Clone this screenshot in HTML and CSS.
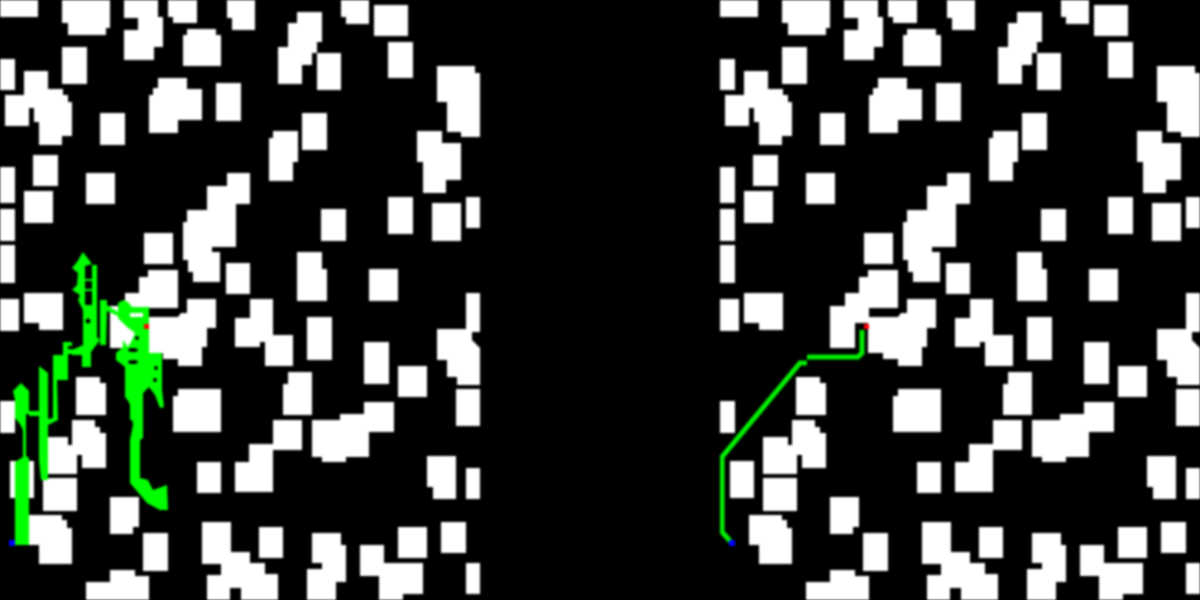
FILE: index.html
```html
<!DOCTYPE html>
<html lang="en">
<head>
<meta charset="utf-8">
<title>Path planning maps</title>
<link rel="stylesheet" href="styles.css">
</head>
<body>
<svg class="defs" width="0" height="0" aria-hidden="true">
  <defs>
    <g id="obstacles" class="obstacle">
      <rect x="0" y="0" width="38" height="17"/>
      <polygon points="62,0 110,0 110,28 106,28 106,35 68,35 68,23 62,23"/>
      <polygon points="124,0 158,0 158,17 163,17 163,47 154,47 154,60 124,60 124,30 138,30 138,18 124,18"/>
      <polygon points="168,0 197,0 197,23 173,23 173,17 168,17"/>
      <polygon points="183,35 187,35 187,29 216,29 216,35 221,35 221,66 183,66"/>
      <polygon points="227,0 255,0 255,30 232,30 232,18 227,18"/>
      <rect x="62" y="47" width="25" height="37"/>
      <rect x="0" y="59" width="15" height="31"/>
      <polygon points="24,71 48,71 48,89 63,89 63,95 68,95 68,102 72,102 72,136 62,136 62,145 39,145 39,122 34,122 34,108 29,108 29,126 5,126 5,95 24,95"/>
      <rect x="100" y="113" width="25" height="32"/>
      <polygon points="158,78 187,78 187,89 202,89 202,120 178,120 178,133 149,133 149,95 153,95 153,88 158,88"/>
      <rect x="216" y="83" width="25" height="38"/>
      <rect x="33" y="155" width="25" height="31"/>
      <rect x="0" y="167" width="15" height="36"/>
      <rect x="24" y="191" width="29" height="32"/>
      <rect x="86" y="173" width="29" height="31"/>
      <rect x="0" y="209" width="15" height="32"/>
      <rect x="0" y="245" width="15" height="38"/>
      <rect x="0" y="299" width="19" height="32"/>
      <polygon points="24,293 63,293 63,330 39,330 39,323 24,323"/>
      <rect x="144" y="233" width="29" height="31"/>
      <rect x="226" y="263" width="24" height="31"/>
      <polygon points="227,173 250,173 250,204 236,204 236,247 212,247 212,252 220,252 220,282 193,282 193,272 188,272 188,260 183,260 183,222 187,222 187,210 207,210 207,186 227,186"/>
      <polygon points="148,270 178,270 178,308 149,308 149,317 178,317 181,313 187,313 187,299 216,299 216,328 207,328 207,347 202,347 202,366 178,366 178,359 163,359 163,353 148,353 148,323 135,323 135,348 110,348 110,306 125,306 125,293 139,293 139,277 148,277"/>
      <polygon points="76,377 100,377 100,383 106,383 106,415 76,415"/>
      <rect x="0" y="401" width="15" height="32"/>
      <rect x="10" y="461" width="24" height="37"/>
      <rect x="43" y="478" width="34" height="33"/>
      <polygon points="43,437 68,437 68,445 72,445 72,420 95,420 95,427 100,427 100,433 106,433 106,468 82,468 82,455 77,455 77,474 43,474"/>
      <polygon points="29,515 62,515 62,520 67,520 67,528 72,528 72,564 39,564 39,545 29,545"/>
      <polygon points="110,497 139,497 139,527 133,527 133,534 110,534"/>
      <rect x="143" y="533" width="25" height="38"/>
      <polygon points="86,582 110,582 110,570 135,570 135,576 149,576 149,600 86,600"/>
      <polygon points="173,396 178,396 178,389 221,389 221,432 173,432"/>
      <rect x="197" y="462" width="24" height="31"/>
      <polygon points="235,462 249,462 249,444 273,444 273,492 235,492"/>
      <rect x="273" y="420" width="29" height="30"/>
      <polygon points="283,384 288,384 288,372 312,372 312,415 283,415"/>
      <polygon points="312,420 340,420 340,414 364,414 364,402 394,402 394,432 369,432 369,457 346,457 346,462 322,462 322,457 312,457"/>
      <polygon points="427,456 456,456 456,499 433,499 433,487 427,487"/>
      <rect x="466" y="468" width="14" height="31"/>
      <rect x="456" y="389" width="24" height="37"/>
      <rect x="259" y="527" width="24" height="31"/>
      <rect x="398" y="527" width="29" height="31"/>
      <rect x="441" y="522" width="25" height="31"/>
      <rect x="466" y="563" width="14" height="31"/>
      <path d="M202 522H231V552H250V563H265V574H278V600H241V588H230V600H207V575H221V564H202Z"/>
      <polygon points="312,533 341,533 341,545 346,545 346,582 336,582 336,600 307,600 307,569 322,569 322,563 312,563"/>
      <polygon points="360,545 384,545 384,563 423,563 423,594 403,594 403,600 379,600 379,576 360,576"/>
      <polygon points="297,12 322,12 322,42 317,42 317,53 312,53 312,65 302,65 302,84 278,84 278,47 288,47 288,23 297,23"/>
      <rect x="317" y="53" width="24" height="37"/>
      <polygon points="341,0 369,0 369,24 346,24 346,17 341,17"/>
      <rect x="374" y="5" width="34" height="31"/>
      <rect x="388" y="42" width="25" height="36"/>
      <polygon points="437,66 475,66 475,73 480,73 480,137 461,137 461,132 447,132 447,102 437,102"/>
      <rect x="302" y="113" width="25" height="37"/>
      <polygon points="269,138 273,138 273,131 298,131 298,162 293,162 293,181 269,181"/>
      <polygon points="417,131 442,131 442,143 461,143 461,180 446,180 446,193 423,193 423,162 417,162"/>
      <rect x="388" y="197" width="25" height="37"/>
      <rect x="466" y="197" width="14" height="31"/>
      <rect x="432" y="203" width="29" height="38"/>
      <rect x="321" y="209" width="25" height="32"/>
      <polygon points="297,252 322,252 322,269 327,269 327,301 297,301"/>
      <rect x="369" y="269" width="29" height="32"/>
      <polygon points="437,329 466,329 466,293 480,293 480,332 472,332 472,340 480,348 480,385 457,385 457,377 447,377 447,360 437,360"/>
      <rect x="307" y="317" width="25" height="43"/>
      <rect x="364" y="342" width="25" height="42"/>
      <rect x="398" y="366" width="29" height="31"/>
      <polygon points="250,299 273,299 273,335 293,335 293,366 265,366 265,342 260,342 260,347 235,347 235,318 250,318"/>
    </g>
  </defs>
</svg>
<main class="maps">
  <svg class="map" viewBox="0 0 480 600" width="480" height="600" role="img" aria-label="Map with a wandering search path">
    <use href="#obstacles"/>
    <g class="route">
      <polygon points="15,545 29,545 29,458 26,456 26,414 29,414 29,391 21,383 13,391 15,400 15,418 20,424 23,430 23,457 15,462"/>
      <polygon points="29,411 45,411 45,416 29,416"/>
      <polygon points="39,366 48,373 48,480 41,480 39,460"/>
      <polygon points="53,355 63,355 63,342 72,342 72,346 68,346 68,380 57,380 58,420 48,425 48,419 53,418"/>
      <polygon points="68,349 83,350 83,354 68,354"/>
      <polygon points="83,252 92,264 85,266 85,305 92,305 92,265 97,265 97,337 100,340 91,352 91,367 82,367 82,355 72,355 72,350 83,345 83,310 78,300 80,295 72,290 77,285 78,273 72,268 77,262"/>
      <rect x="85" y="279" width="7" height="2"/>
      <rect x="85" y="289" width="7" height="2"/>
      <polygon points="100,300 107,300 107,305 118,312 118,316 107,311 106,345 100,345"/>
      <polygon points="118,303 123,300 128,302 132,307 149,307 149,353 162,353 162,390 164,407 160,408 155,395 149,387 143,393 143,420 130,420 130,403 125,397 125,367 116,360 116,353 123,347 123,340 128,347 132,340 135,333 127,327 118,318"/>
      <polygon points="128,400 138,400 143,417 143,438 140,440 140,478 148,480 153,490 167,485 168,510 160,510 147,503 142,497 130,483 130,440 133,425 130,405"/>
    </g>
    <rect class="window" x="130" y="313" width="13" height="4"/>
    <circle class="hole" cx="88" cy="321" r="2.5"/>
    <circle class="hole" cx="137" cy="338" r="2"/>
    <ellipse class="hole" cx="133" cy="350" rx="5" ry="2"/>
    <ellipse class="hole" cx="133" cy="362" rx="5" ry="2"/>
    <circle class="hole" cx="156" cy="368" r="2"/>
    <circle class="hole" cx="155" cy="380" r="2"/>
    <rect class="goal" x="144" y="324" width="5" height="5"/>
    <rect class="start" x="9" y="540" width="6" height="6"/>
  </svg>
  <svg class="map" viewBox="0 0 480 600" width="480" height="600" role="img" aria-label="Map with the smoothed path">
    <use href="#obstacles"/>
    <path class="smooth" d="M11 542L2 532V457L80 363H87M87 357H138L142 353V330"/>
    <rect class="goal" x="144" y="324" width="5" height="5"/>
    <rect class="start" x="9" y="540" width="6" height="6"/>
  </svg>
</main>
</body>
</html>
```

FILE: styles.css
```css
html,
body {
  margin: 0;
  padding: 0;
  background: #000;
}

body {
  width: 1200px;
  height: 600px;
  overflow: hidden;
}

.defs {
  display: block;
  height: 0;
}

.maps {
  display: flex;
  justify-content: space-between;
  width: 1200px;
  height: 600px;
}

.map {
  display: block;
  background: #000;
  filter: blur(1px);
  flex: none;
}

.obstacle {
  fill: #fff;
}

.route {
  fill: #0f0;
}

.window {
  fill: #fff;
}

.hole {
  fill: #000;
}

.smooth {
  fill: none;
  stroke: #0e0;
  stroke-width: 5;
}

.goal {
  fill: #f00;
}

.start {
  fill: #00f;
}
```
